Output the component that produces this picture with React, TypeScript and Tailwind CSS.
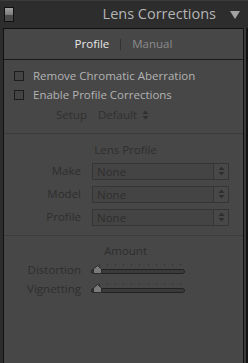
import React from "react";

const font = { fontFamily: '"Open Sans", "Liberation Sans", sans-serif' };

// Small stepper arrows used by the popup menus
const Arrows = ({ className }: { className?: string }) => (
  <svg width="7" height="10" viewBox="0 0 7 10" className={className}>
    <path d="M3.5 0.5 L6.5 4 L0.5 4 Z" fill="currentColor" />
    <path d="M3.5 9.5 L6.5 6 L0.5 6 Z" fill="currentColor" />
  </svg>
);

const Checkbox = ({ label }: { label: string }) => (
  <div className="flex items-center h-[19px]">
    <div className="ml-[10px] w-[10px] h-[10px] border border-[#1c1c1c] bg-[#444444]" />
    <span className="ml-[9px] text-[11.5px] text-[#b3b3b3] leading-none">{label}</span>
  </div>
);

const Select = ({ label }: { label: string }) => (
  <div className="flex items-center h-[23px]">
    <span className="w-[77px] text-right text-[11.5px] text-[#2e2e2e] leading-none">{label}</span>
    <div className="ml-[11px] flex w-[137px] h-[17px] border border-[#353535] bg-[#444444]">
      <span className="flex-1 pl-[4px] text-[11.5px] leading-[15px] text-[#2e2e2e]">None</span>
      <div className="w-[15px] border-l border-[#353535] bg-[#484848] flex items-center justify-center text-[#2e2e2e]">
        <Arrows />
      </div>
    </div>
  </div>
);

const Slider = ({ label }: { label: string }) => (
  <div className="flex items-center h-[19px]">
    <span className="w-[77px] text-right text-[11.5px] text-[#2e2e2e] leading-none">{label}</span>
    <div className="relative ml-[10px] w-[94px] h-[12px]">
      <div className="absolute left-[8px] right-[4px] top-0 flex justify-between">
        {Array.from({ length: 11 }).map((_, i) => (
          <div key={i} className="w-px h-[2px] bg-[#353535]" />
        ))}
      </div>
      <div className="absolute left-0 right-0 top-[5px] h-[5px] rounded-full border border-[#222222] bg-[#3a3a3a]" />
      <svg width="9" height="9" viewBox="0 0 9 9" className="absolute left-[2px] top-[1px]">
        <path d="M4.5 0.5 L8.5 4 L8.5 8.5 L0.5 8.5 L0.5 4 Z" fill="#7a7a7a" stroke="#2a2a2a" strokeWidth="1" />
      </svg>
    </div>
  </div>
);

const SectionTitle = ({ children }: { children: string }) => (
  <div className="text-center text-[11.5px] text-[#2e2e2e] leading-none pl-[4px]">{children}</div>
);

export default function App() {
  return (
    <div className="w-[248px] h-[363px] bg-[#2d2d2d] flex flex-col overflow-hidden" style={font}>
      {/* header */}
      <div className="h-[28px] flex items-center border-t border-[#3a3a3a]">
        <div className="ml-[4px] w-[10px] h-[15px] border border-[#111111] flex flex-col">
          <div className="h-1/2 bg-gradient-to-b from-[#a0a0a0] to-[#7a7a7a]" />
          <div className="h-1/2 bg-[#4a4a4a]" />
        </div>
        <span className="ml-auto text-[14.5px] text-[#b5b5b5] leading-none">Lens Corrections</span>
        <svg width="10" height="8" viewBox="0 0 10 8" className="ml-[14px] mr-[8px]">
          <path d="M0 0 L10 0 L5 8 Z" fill="#a3a3a3" />
        </svg>
      </div>

      <div className="flex flex-1">
        <div className="ml-[3px] w-[241px] flex flex-col border-t border-l border-r border-[#111111] bg-[#474747]">
          {/* tabs */}
          <div className="h-[30px] flex items-center justify-center text-[11.5px] leading-none">
            <span className="text-[#e6e6e6]">Profile</span>
            <span className="mx-[11px] w-px h-[11px] bg-[#333333]" />
            <span className="text-[#8c8c8c]">Manual</span>
          </div>
          <div className="h-px bg-[#1a1a1a]" />

          <div className="pt-[6px]">
            <Checkbox label="Remove Chromatic Aberration" />
            <Checkbox label="Enable Profile Corrections" />
          </div>

          <div className="flex items-center h-[20px] mt-[1px] text-[11.5px] leading-none text-[#303030]">
            <span className="ml-[52px]">Setup</span>
            <span className="ml-[11px]">Default</span>
            <Arrows className="ml-[5px] text-[#303030]" />
          </div>

          <div className="mt-[8px] h-px bg-[#3c3c3c]" />

          <div className="pt-[10px]">
            <SectionTitle>Lens Profile</SectionTitle>
            <div className="mt-[4px]">
              <Select label="Make" />
              <Select label="Model" />
              <Select label="Profile" />
            </div>
          </div>

          <div className="mt-[6px] h-px bg-[#3c3c3c]" />

          <div className="pt-[9px]">
            <SectionTitle>Amount</SectionTitle>
            <div className="mt-[4px]">
              <Slider label="Distortion" />
              <Slider label="Vignetting" />
            </div>
          </div>
        </div>
        <div className="w-[2px] bg-[#3a3a3a]" />
        <div className="w-[2px] bg-[#111111]" />
      </div>
    </div>
  );
}
